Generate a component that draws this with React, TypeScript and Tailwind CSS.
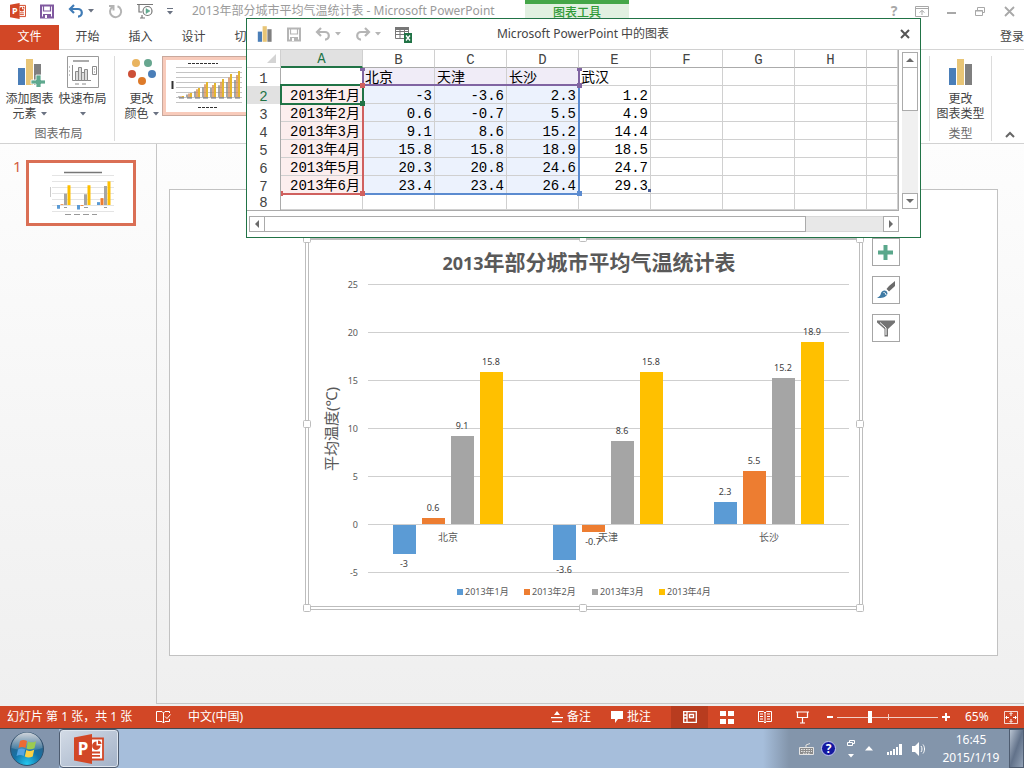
import { ReactNode } from 'react';

const months = ['2013年1月', '2013年2月', '2013年3月', '2013年4月'];
const colors = ['#5b9bd5', '#ed7d31', '#a5a5a5', '#ffc000'];
const cities = [
  { name: '北京', values: [-3, 0.6, 9.1, 15.8] },
  { name: '天津', values: [-3.6, -0.7, 8.6, 15.8] },
  { name: '长沙', values: [2.3, 5.5, 15.2, 18.9] },
];

const columns = ['A', 'B', 'C', 'D', 'E', 'F', 'G', 'H', ''];
const sheet = [
  ['', '北京', '天津', '长沙', '武汉'],
  ['2013年1月', '-3', '-3.6', '2.3', '1.2'],
  ['2013年2月', '0.6', '-0.7', '5.5', '4.9'],
  ['2013年3月', '9.1', '8.6', '15.2', '14.4'],
  ['2013年4月', '15.8', '15.8', '18.9', '18.5'],
  ['2013年5月', '20.3', '20.8', '24.6', '24.7'],
  ['2013年6月', '23.4', '23.4', '26.4', '29.3'],
  [],
];

function Caret({ className = 'text-gray-500' }: { className?: string }) {
  return (
    <svg className={className} width="6" height="4" viewBox="0 0 6 4" fill="currentColor">
      <path d="M0 0h6L3 3.5z" />
    </svg>
  );
}

function PowerPointLogo({ size }: { size: number }) {
  return (
    <svg width={size} height={size} viewBox="0 0 30 30">
      <path d="M16 4.5h13v21H16z" fill="#fff" stroke="#d24726" strokeWidth="1.8" />
      <path d="M18 18.5h8M18 21.8h8" stroke="#d24726" strokeWidth="1.8" />
      <path d="M22.5 7.5v4h4a4.2 4.2 0 1 1-4-4z" fill="#d24726" />
      <path d="M24 6.5a4 4 0 0 1 3.6 3.6H24z" fill="#d24726" />
      <path d="M0 3.5 18 0v30L0 26.5z" fill="#d24726" />
      <text x="9" y="21" textAnchor="middle" fontSize="17" fontWeight="700" fill="#fff">P</text>
    </svg>
  );
}

function SaveIcon({ className }: { className: string }) {
  return (
    <svg className={className} width="14" height="15" viewBox="0 0 14 15" fill="none" stroke="currentColor" strokeWidth="2">
      <path d="M1 1.5h12v12H1z" />
      <path d="M3.5 2v5h7V2" strokeWidth="1.2" />
      <path d="M3 10h8v4H3z" fill="currentColor" stroke="none" />
      <path d="M5 11h2v3H5z" fill="#fff" stroke="none" />
    </svg>
  );
}

function UndoIcon({ className }: { className: string }) {
  return (
    <svg className={className} width="16" height="14" viewBox="0 0 16 14" fill="none" stroke="currentColor" strokeWidth="2.2">
      <path d="M6 1 2 5l4 4M2.5 5H10a3.6 3.6 0 0 1 0 7.6" />
    </svg>
  );
}

function BarsIcon({ size, plus }: { size: number; plus?: boolean }) {
  return (
    <svg width={size} height={size} viewBox="0 0 30 30">
      <path d="M3 11h7v17H3z" fill="#4a7eb8" />
      <path d="M11 2h7v26h-7z" fill="#e8c576" />
      <path d="M19 7h7v21h-7z" fill="#7f7f7f" />
      {plus && <path d="M21 18h5v5h5v4h-5v5h-5v-5h-5v-4h5z" fill="#5fa98f" stroke="#fff" strokeWidth=".8" />}
    </svg>
  );
}

function LayoutIcon() {
  return (
    <svg width="32" height="32" viewBox="0 0 32 32" fill="none" stroke="#8a8a8a">
      <path d="M.5.5h31v31H.5z" fill="#fff" stroke="#9a9a9a" />
      <path d="M6 5h16" stroke="#aaa" strokeWidth="2" />
      <path d="M5.5 9v15.5H24" />
      <path d="M8.500 15.500h3v9h-3zM11.500 11.500h3v13h-3zM14.500 16.500h3v8h-3zM17.500 13.500h3v11h-3z" fill="#ddd" />
      <path d="M25.500 10.500h4v8h-4zM27 13h1M27 16h1M8 28h4M15 28h4M2 11h1M2 15h1M2 19h1" />
    </svg>
  );
}

function ColorsIcon() {
  return (
    <svg width="30" height="30" viewBox="0 0 30 30">
      <circle cx="9" cy="6" r="4" fill="#e9b45f" />
      <circle cx="21" cy="6" r="4" fill="#67a68f" />
      <circle cx="5" cy="17" r="4" fill="#cd4f37" />
      <circle cx="25" cy="17" r="4" fill="#4a7eb8" />
      <circle cx="15" cy="24" r="4" fill="#dd7a29" />
    </svg>
  );
}

function StylePreview() {
  const heights = [1, 4, 9, 15, 14, 18, 23, 26];
  return (
    <svg width="84" height="52" viewBox="0 0 84 52">
      <path d="M0 0h84v52H0z" fill="#fff" />
      <path d="M22 3.5h30M32 47.500h20" stroke="#333" strokeDasharray="3 1" />
      {[8, 13, 18, 23, 28, 33, 38, 43].map((y) => (
        <path key={y} d={`M10 ${y - 0.5}h66`} stroke="#aaa" strokeWidth=".7" />
      ))}
      <path d="M6.500 21v8" stroke="#333" strokeWidth="2" />
      {heights.map((h, i) => (
        <g key={i}>
          <path d={`M${13 + i * 8} ${37 - h * 0.65}v${h * 0.65}`} stroke="#8a8a8a" strokeWidth="1.5" />
          <path d={`M${15 + i * 8} ${37 - h * 0.85}v${h * 0.85}`} stroke="#d68b52" strokeWidth="1.5" />
          <path d={`M${17 + i * 8} ${37 - h}v${h}`} stroke="#e3b72f" strokeWidth="2" />
          <path d={`M${13 + i * 8} 38h5`} stroke="#333" strokeWidth=".7" />
        </g>
      ))}
    </svg>
  );
}

function RibbonButton({ icon, lines, caret }: { icon: ReactNode; lines: string[]; caret?: boolean }) {
  return (
    <button className="flex w-[53px] flex-col items-center whitespace-nowrap leading-[15px]">
      <span className="mb-[3px] flex h-8 items-center">{icon}</span>
      <span>{lines[0]}</span>
      <span className="flex h-[15px] items-center gap-1">
        {lines[1]}
        {caret && <Caret />}
      </span>
    </button>
  );
}

function TitleBar() {
  return (
    <header className="flex h-[25px] items-start">
      <div className="flex h-[22px] w-[525px] shrink-0 items-center gap-3.5 pl-2.5">
        <PowerPointLogo size={16} />
        <button aria-label="保存"><SaveIcon className="text-[#80599f]" /></button>
        <button aria-label="撤消" className="flex items-center gap-1">
          <UndoIcon className="text-[#3f7bb6]" />
          <Caret />
        </button>
        <button aria-label="重复">
          <svg width="15" height="15" viewBox="0 0 15 15" fill="none" stroke="#b4b4b4" strokeWidth="2">
            <path d="M9.500 2.300a5.600 5.600 0 1 1-5 .6M1 2h4.500v4.500" />
          </svg>
        </button>
        <button aria-label="从头开始">
          <svg width="16" height="16" viewBox="0 0 16 16" fill="none" stroke="#777" strokeWidth="1.2">
            <path d="M0 1.500h16M2 2v7h3M5 12v3M3 15h5" />
            <circle cx="10.500" cy="8" r="4.500" fill="#fff" />
            <path d="m9 5.500 4 2.500-4 2.500z" fill="#5fa98f" stroke="#5fa98f" strokeWidth=".5" />
          </svg>
        </button>
        <button aria-label="自定义快速访问工具栏" className="flex flex-col items-center gap-0.5">
          <span className="h-px w-1.5 bg-gray-500" />
          <Caret />
        </button>
        <h1 className="ml-[5px] whitespace-nowrap text-[#9b9b9b]">2013年部分城市平均气温统计表 - Microsoft PowerPoint</h1>
      </div>
      <div className="h-[25px] w-[104px] shrink-0 border-t-4 border-[#44a648] bg-[#e1f0e1] text-center font-medium leading-[17px] text-[#2f9a37]">
        图表工具
      </div>
      <div className="ml-auto flex h-[22px] items-center gap-[15px] pr-2 text-[#a8a8a8]">
        <button aria-label="帮助" className="w-3 text-sm font-bold">?</button>
        <button aria-label="功能区显示选项">
          <svg width="14" height="12" viewBox="0 0 14 12" fill="none" stroke="currentColor">
            <path d="M.5 1.500h13v10H.5zM.5 3.500h13M7 10V5.500M4.500 7.500 7 5.500l2.500 2" />
          </svg>
        </button>
        <button aria-label="最小化">
          <svg width="14" height="12" viewBox="0 0 14 12" stroke="currentColor" strokeWidth="2"><path d="M3 8h9" /></svg>
        </button>
        <button aria-label="向下还原">
          <svg width="14" height="12" viewBox="0 0 14 12" fill="none" stroke="currentColor">
            <path d="M2.500 5.500h7v5h-7zM4.500 5V2.500h7v5H10M2 6h8" />
          </svg>
        </button>
        <button aria-label="关闭">
          <svg width="14" height="12" viewBox="0 0 14 12" stroke="currentColor" strokeWidth="1.8"><path d="m3 2 9 9M12 2l-9 9" /></svg>
        </button>
      </div>
    </header>
  );
}

function Ribbon() {
  return (
    <>
      <nav className="flex h-[25px] items-center border-b border-[#d5d5d5]">
        <button className="h-[25px] w-[59px] bg-[#d24726] text-white">文件</button>
        <div className="ml-[2px] flex">
          {['开始', '插入', '设计', '切换'].map((tab) => (
            <button key={tab} className="w-[53px] text-center">{tab}</button>
          ))}
        </div>
        <button className="ml-auto">登录</button>
      </nav>
      <div className="flex h-[94px] items-stretch border-b border-[#d2d2d2] pb-0.5 pt-1.5">
        <div className="flex w-[115px] flex-col justify-between border-r border-[#dcdcdc] pl-[3px]">
          <div className="flex">
            <RibbonButton icon={<BarsIcon size={30} plus />} lines={['添加图表', '元素']} caret />
            <RibbonButton icon={<LayoutIcon />} lines={['快速布局', '']} caret />
          </div>
          <p className="text-center leading-[15px] text-[#6a6a6a]">图表布局</p>
        </div>
        <div className="flex items-start">
          <div className="-mr-1.5">
            <RibbonButton icon={<ColorsIcon />} lines={['更改', '颜色']} caret />
          </div>
          <button aria-label="图表样式" className="h-[60px] w-[94px] border border-[#c9a89c] bg-[#f8cbbb] p-[3px]">
            <StylePreview />
          </button>
        </div>
        <div className="ml-auto flex w-[63px] flex-col items-center justify-between border-x border-[#dcdcdc]">
          <RibbonButton icon={<BarsIcon size={30} />} lines={['更改', '图表类型']} />
          <p className="leading-[15px] text-[#6a6a6a]">类型</p>
        </div>
        <button aria-label="折叠功能区" className="flex w-8 items-end justify-center pb-0.5 pl-1">
          <svg width="10" height="8" viewBox="0 0 10 8" fill="none" stroke="#666" strokeWidth="2"><path d="m1 6 4-4 4 4" /></svg>
        </button>
      </div>
    </>
  );
}

// Drawing area of the chart: plot runs from x=66 to x=547, zero line at y=288
const yOf = (v: number) => Math.round(288 - v * 9.62);

function Chart() {
  return (
    <svg width="564" height="378" viewBox="0 0 564 378" className="shrink-0" role="img" aria-label="2013年部分城市平均气温统计表">
      <g fill="#fff" stroke="#bdbdbd">
        <path d="M3.500 2.500h557v371H3.500z" />
        <path d="M6.500 3.500h551v367H6.500z" />
        {[[1, -1], [277, -2], [554, -1], [1, 184], [554, 184], [1, 368], [277, 368], [554, 368]].map(([x, y]) => (
          <rect key={`${x}-${y}`} x={x + 0.5} y={y + 0.5} width="7" height="7" rx="1" />
        ))}
      </g>
      <text x="287" y="34" textAnchor="middle" fontWeight="700" fill="#595959" fontSize="21">
        <tspan fontSize="18">2013</tspan>年部分城市平均气温统计表
      </text>
      <g fontSize="9" fill="#595959">
        {[25, 20, 15, 10, 5, 0, -5].map((v) => (
          <g key={v}>
            <path d={`M66 ${yOf(v) + 0.5}h481`} stroke="#cfcfcf" />
            <text x="56" y={yOf(v) + 4} textAnchor="end">{v}</text>
          </g>
        ))}
      </g>
      <text transform="translate(35 193) rotate(-90)" textAnchor="middle" fontSize="15" fill="#595959">平均温度(℃)</text>
      {cities.map((city, c) => (
        <g key={city.name}>
          {city.values.map((v, i) => {
            const x = 91 + Math.floor(c * 160.5) + i * 29;
            const top = Math.min(yOf(v), yOf(0));
            return (
              <g key={i}>
                <rect x={x} y={v < 0 ? top + 1 : top} width="23" height={Math.abs(yOf(v) - yOf(0))} fill={colors[i]} />
                <text x={x + 11} y={v < 0 ? yOf(v) + 14 : yOf(v) - 7} textAnchor="middle" fontSize="9" fill="#404040">{v}</text>
              </g>
            );
          })}
          <text x={146 + Math.floor(c * 160.5)} y="305" textAnchor="middle" fontSize="10" fill="#595959">{city.name}</text>
        </g>
      ))}
      {months.map((month, i) => (
        <g key={month}>
          <rect x={155 + Math.round(i * 67.4)} y="353" width="6" height="6" fill={colors[i]} />
          <text x={163 + Math.round(i * 67.4)} y="359" fontSize="9" fill="#595959">{month}</text>
        </g>
      ))}
    </svg>
  );
}

function SlideThumbnail() {
  return (
    <svg width="104" height="60" viewBox="0 0 104 60">
      <path d="M0 0h104v60H0z" fill="#fff" />
      <path d="M35 9.500h38" stroke="#777" strokeWidth="1.500" />
      {[12, 18, 24, 30, 36, 42, 48].map((y) => (
        <path key={y} d={`M23 ${y + 0.5}h62`} stroke="#ddd" strokeWidth=".8" />
      ))}
      {cities.map((city, c) =>
        city.values.map((v, i) => (
          <rect
            key={`${c}-${i}`}
            x={28 + c * 20 + i * 3.5}
            y={v < 0 ? 42 : 42 - v * 1.25}
            width="3"
            height={Math.abs(v) * 1.25}
            fill={colors[i]}
          />
        )),
      )}
      <path d="M35 44.500h3M55 44.500h4M75 44.500h3M36 51.500h32" stroke="#999" strokeDasharray="6 3" />
      <path d="M21.500 24v10" stroke="#ccc" />
    </svg>
  );
}

function ChartTools() {
  return (
    <div className="flex flex-col gap-2.5 pt-[2px]">
      {[
        { label: '图表元素', icon: <path d="M7.500 2h4v5.500H17v4h-5.500V17h-4v-5.500H2v-4h5.500z" fill="#5aa78b" /> },
        {
          label: '图表样式',
          icon: (
            <>
              <path d="M19 0 13 5 10.500 8l2.500 2.500L19 5z" fill="#6b6b6b" />
              <path d="m10 8.500 2.500 2.500" stroke="#fff" />
              <path d="M9 9.500a3 3 0 0 1 2.500 3C11 16 6 17.500 1 17c3-1.500 3.500-3 4-5 .7-2 2.400-2.800 4-2.500z" fill="#3f7ba5" />
              <path d="M7.500 11.500c1.500 0 2.500 1 2.500 2.500" stroke="#fff" fill="none" />
            </>
          ),
        },
        {
          label: '图表筛选器',
          icon: (
            <>
              <path d="M1 1.500h18v2L12 10v7.500H8.500V10L1 3.500z" fill="#747474" />
              <path d="m4 3.500 6 5.500v7" stroke="#fff" fill="none" />
            </>
          ),
        },
      ].map((tool) => (
        <button key={tool.label} aria-label={tool.label} className="flex h-7 w-7 items-center justify-center border border-[#a6a6a6] bg-white">
          <svg width="20" height="19" viewBox="0 0 20 19">{tool.icon}</svg>
        </button>
      ))}
    </div>
  );
}

function Workspace() {
  return (
    <main className="flex flex-1 bg-gradient-to-b from-[#fdfdfd] to-[#efefef] pb-[2px]">
      <aside className="flex w-[157px] shrink-0 items-start border-r border-[#c6c6c6] pl-3 pt-4">
        <span className="w-3.5 pl-px text-[15px] leading-3 text-[#d35f41]">1</span>
        <button aria-label="幻灯片 1" className="border-[3px] border-[#da6f55]"><SlideThumbnail /></button>
      </aside>
      <section className="flex flex-1 border-b border-[#c6c6c6] pb-[47px] pl-3 pr-[26px] pt-[45px]">
        <div className="flex flex-1 items-start gap-1.5 border border-[#c2c2c2] bg-white pl-[132px] pt-[46px]">
          <Chart />
          <ChartTools />
        </div>
      </section>
    </main>
  );
}

function cellStyle(row: number, col: number) {
  if (row === 0) return col >= 1 && col <= 3 ? 'bg-[#f0ecf7]' : '';
  if (row > 6) return '';
  if (col === 0) return 'bg-[#fceeee] text-right';
  if (col <= 3) return 'bg-[#ecf2fd] text-right';
  return 'text-right';
}

function SheetTable() {
  return (
    <div className="relative">
      <table className="w-[652px] table-fixed border-separate border-spacing-0 border-b border-r border-[#ababab] font-['Liberation_Mono','Noto_Sans_CJK_SC',monospace] text-sm leading-[13px] text-black">
        <colgroup>
          <col className="w-[34px]" />
          <col className="w-[82px]" />
          {columns.slice(1, 8).map((c) => <col key={c} className="w-[72px]" />)}
          <col />
        </colgroup>
        <thead>
          <tr className="h-[18px] text-[#444]">
            <th className="border-b border-r border-[#d0d0d0] p-0">
              <svg className="ml-auto mr-1" width="9" height="9" viewBox="0 0 9 9"><path d="M9 0v9H0z" fill="#d4d4d4" /></svg>
            </th>
            {columns.map((c) => (
              <th
                key={c}
                scope="col"
                className={`border-r px-0 pb-0 pt-[3px] font-normal ${c === 'A' ? 'border-b-2 border-b-[#217346] border-r-[#d0d0d0] bg-[#e1e1e1] text-[#217346]' : 'border-b border-b-[#ababab] border-r-[#d0d0d0]'}`}
              >
                {c}
              </th>
            ))}
          </tr>
        </thead>
        <tbody>
          {sheet.map((row, r) => (
            <tr key={r} className={r === 7 ? 'h-4' : 'h-[18px]'}>
              <th
                scope="row"
                className={`border-r border-[#ababab] px-0 pb-0 font-normal ${r === 7 ? 'pt-[2px]' : 'pt-1'} ${r === 1 ? 'bg-[#e1e1e1] text-[#217346]' : 'text-[#444]'}`}
              >
                {r + 1}
              </th>
              {columns.map((c, i) => (
                <td
                  key={c}
                  className={`whitespace-nowrap border-b border-r border-[#d0d0d0] px-[2px] pb-0 ${r === 7 ? 'pt-[2px]' : 'pt-1'} ${cellStyle(r, i)}`}
                >
                  {row[i]}
                </td>
              ))}
            </tr>
          ))}
        </tbody>
      </table>
      {/* Source range outlines */}
      <div className="absolute left-[115px] top-[18px] h-[18px] w-[218px] border-x-2 border-b-2 border-[#8064a2]" />
      <div className="absolute left-[34px] top-[36px] h-[109px] w-[83px] border-b-2 border-r-2 border-[#d0605e]" />
      <div className="absolute left-[117px] top-[36px] h-[109px] w-[216px] border-b-2 border-r-2 border-[#5b8bd0]" />
      <div className="absolute left-[33px] top-[34px] h-[21px] w-[84px] border-2 border-[#217346]" />
      <div className="absolute left-[113px] top-[18px] h-[3px] w-[5px] bg-[#8064a2]" />
      <div className="absolute left-[330px] top-[18px] h-[3px] w-[5px] bg-[#8064a2]" />
      <div className="absolute left-[113px] top-[33px] size-[5px] bg-[#d0605e]" />
      <div className="absolute left-[113px] top-[51px] size-[5px] bg-[#217346]" />
      <div className="absolute left-[330px] top-[33px] size-[5px] bg-[#8064a2]" />
      <div className="absolute left-[113px] top-[141px] size-[5px] bg-[#d0605e]" />
      <div className="absolute left-[330px] top-[141px] size-[5px] bg-[#5b8bd0]" />
      <div className="absolute left-[34px] top-[141px] h-[5px] w-[2px] bg-[#d0605e]" />
      <div className="absolute left-[401px] top-[139px] size-[3px] bg-[#4b5f94]" />
    </div>
  );
}

function ScrollButton({ label, d }: { label: string; d: string }) {
  return (
    <button aria-label={label} className="flex size-4 shrink-0 items-center justify-center border border-[#ababab] bg-white">
      <svg width="8" height="8" viewBox="0 0 8 8" fill="#6b6b6b"><path d={d} /></svg>
    </button>
  );
}

function ChartDataWindow() {
  return (
    <section className="absolute left-[246px] top-[18px] w-[675px] border border-[#217346] bg-white pb-[5px]">
      <header className="flex h-[30px] items-center">
        <div className="flex flex-1 items-center gap-3.5 pl-[9px]">
          <BarsIcon size={18} />
          <button aria-label="保存" className="-ml-px"><SaveIcon className="text-[#b5b5b5]" /></button>
          <button aria-label="撤消" className="flex items-center gap-1">
            <UndoIcon className="text-[#b5b5b5]" />
            <Caret className="text-[#b5b5b5]" />
          </button>
          <button aria-label="恢复" className="flex items-center gap-1">
            <UndoIcon className="-scale-x-100 text-[#b5b5b5]" />
            <Caret className="text-[#b5b5b5]" />
          </button>
          <button aria-label="在 Microsoft Excel 中编辑数据">
            <svg width="17" height="17" viewBox="0 0 17 17">
              <path d="M.5 2.500h13v10H.5zM.5 5.500h13M.5 8.500h13M5 3v10M9.500 3v10" fill="none" stroke="#777" />
              <path d="M0 1h14v3H0z" fill="#777" />
              <path d="M9 7h8v10H9z" fill="#217346" />
              <path d="m11 9.500 4 5M15 9.500l-4 5" stroke="#fff" strokeWidth="1.300" />
            </svg>
          </button>
        </div>
        <h2 className="text-[#444]">Microsoft PowerPoint 中的图表</h2>
        <div className="flex flex-1 justify-end pr-2.5">
          <button aria-label="关闭">
            <svg width="10" height="10" viewBox="0 0 10 10" stroke="#555" strokeWidth="2"><path d="m1 1 8 8M9 1 1 9" /></svg>
          </button>
        </div>
      </header>
      <div className="flex border-t border-[#d0d0d0]">
        <SheetTable />
        <div className="my-[2px] ml-[3px] flex w-4 flex-col bg-[#f0f0f0]">
          <ScrollButton label="向上" d="M4 2 8 6H0z" />
          <div className="-mt-px h-11 border border-[#ababab] bg-white" />
          <div className="flex-1" />
          <ScrollButton label="向下" d="M0 2h8L4 6z" />
        </div>
      </div>
      <div className="ml-[2px] mt-[5px] flex w-[650px] bg-[#e8e8e8]">
        <ScrollButton label="向左" d="M6 0v8L2 4z" />
        <div className="-ml-px w-[542px] border border-[#ababab] bg-white" />
        <div className="flex-1 border-y border-[#d8d8d8]" />
        <ScrollButton label="向右" d="M2 0v8l4-4z" />
      </div>
    </section>
  );
}

function StatusBar() {
  return (
    <footer className="flex h-[22px] items-center bg-[#d24726] pl-[7px] text-white">
      <span className="w-[149px] whitespace-nowrap">幻灯片 第 1 张，共 1 张</span>
      <button aria-label="拼写检查" className="w-8">
        <svg width="15" height="13" viewBox="0 0 15 13" fill="none" stroke="currentColor">
          <path d="M7.500 2 6 .5H.5v10H6L7.500 12 9 10.500h4.500V8M7.500 2v10M7.500 2 9 .5h4.500V2M9 5.500l2 2 3.500-4" />
        </svg>
      </button>
      <button>中文(中国)</button>
      <div className="ml-auto flex h-full items-center">
        <button className="mr-5 flex items-center gap-1">
          <svg width="12" height="12" viewBox="0 0 12 12" fill="currentColor"><path d="M6 0 9 4H3zM0 6h12v1.300H0zM1 10h10v1.300H1z" /></svg>
          备注
        </button>
        <button className="mr-5 flex items-center gap-1">
          <svg width="12" height="12" viewBox="0 0 12 12" fill="currentColor"><path d="M0 0h12v8H7l-3 4V8H0z" /></svg>
          批注
        </button>
        <button aria-label="普通视图" className="flex h-full w-[37px] items-center justify-center bg-[#b83c1f]">
          <svg width="14" height="12" viewBox="0 0 14 12" fill="none" stroke="currentColor" strokeWidth="1.300">
            <path d="M.7.7h12.600v10.600H.7zM4 1v10M6.500 3.500h4v3h-4zM1 4h3M1 7h3" />
          </svg>
        </button>
        <button aria-label="幻灯片浏览" className="flex w-[38px] justify-center">
          <svg width="14" height="13" viewBox="0 0 14 13" fill="currentColor"><path d="M0 0h6v5H0zM8 0h6v5H8zM0 8h6v5H0zM8 8h6v5H8z" /></svg>
        </button>
        <button aria-label="阅读视图" className="flex w-[37px] justify-center">
          <svg width="14" height="13" viewBox="0 0 14 13" fill="none" stroke="currentColor">
            <path d="M7 2 5.500.5H.5v10h5L7 12l1.500-1.500h5V.5h-5zM7 2v10M2 3h3M2 5.500h3M2 8h3M9 3h3M9 5.500h3M9 8h3" />
          </svg>
        </button>
        <button aria-label="幻灯片放映" className="flex w-[38px] justify-center">
          <svg width="13" height="13" viewBox="0 0 13 13" fill="none" stroke="currentColor" strokeWidth="1.200">
            <path d="M0 1h13M1.500 1.500v5h10v-5M6.500 6.500v5M4 12h5" />
          </svg>
        </button>
        <button aria-label="缩小" className="ml-1.5 h-0.5 w-1.5 bg-white" />
        <span className="relative mx-1 flex h-full items-center">
          <input
            type="range"
            aria-label="显示比例"
            aria-valuetext="65%"
            defaultValue={32}
            className="h-3 w-[101px] appearance-none bg-transparent [&::-webkit-slider-runnable-track]:h-px [&::-webkit-slider-runnable-track]:bg-[#f3d0c6] [&::-webkit-slider-thumb]:-mt-[6px] [&::-webkit-slider-thumb]:h-3 [&::-webkit-slider-thumb]:w-1 [&::-webkit-slider-thumb]:appearance-none [&::-webkit-slider-thumb]:bg-white"
          />
          <span className="absolute left-1/2 h-1.5 w-px bg-[#f3d0c6]" />
        </span>
        <button aria-label="放大">
          <svg width="8" height="8" viewBox="0 0 8 8" stroke="currentColor" strokeWidth="2"><path d="M0 4h8M4 0v8" /></svg>
        </button>
        <span className="ml-[15px] w-[39px]">65%</span>
        <button aria-label="使幻灯片适应当前窗口" className="mr-1.5">
          <svg width="14" height="13" viewBox="0 0 14 13" fill="none" stroke="currentColor">
            <path d="M.5.5h13v12H.5z" strokeOpacity=".8" />
            <path d="M7 2v3M7 8v3M2 6.500h3M9 6.500h3M5.500 3 7 1.500 8.500 3M5.500 10 7 11.500 8.500 10M3 5 1.500 6.500 3 8M11 5l1.500 1.500L11 8" />
          </svg>
        </button>
      </div>
    </footer>
  );
}

function Taskbar() {
  return (
    <div className="flex h-10 items-center border-t border-[#45494f] bg-[#a6bedb] text-white">
      <div className="flex h-full w-[59px] items-center justify-center bg-[#8395ad] pr-1.5">
        <button aria-label="开始">
          <svg width="36" height="36" viewBox="0 0 36 36">
            <defs>
              <radialGradient id="orb" cx=".5" cy=".95" r=".9">
                <stop offset="0" stopColor="#25c8ef" />
                <stop offset=".45" stopColor="#1473a8" />
                <stop offset="1" stopColor="#3c5a78" />
              </radialGradient>
              <linearGradient id="gloss" x1="0" y1="0" x2="0" y2="1">
                <stop offset="0" stopColor="#fff" stopOpacity=".75" />
                <stop offset="1" stopColor="#fff" stopOpacity=".1" />
              </linearGradient>
            </defs>
            <circle cx="18" cy="18" r="16.500" fill="url(#orb)" stroke="#31506c" />
            <path d="M2.500 17a15.500 15.500 0 0 1 31 0c-8 3-22 3-31 0z" fill="url(#gloss)" />
            <path d="M11 10c2.500-1.500 4.500-1.300 7 0l-1.500 7c-2.500-1.200-4.500-1.200-7 0z" fill="#ee6a34" />
            <path d="M19 10.500c2.500 1.200 5 1.200 8-.3l-1.500 7c-2.800 1.400-5 1.400-8 .2z" fill="#9ccb50" />
            <path d="M9 18.500c2.500-1.200 4.700-1.200 7.200 0L14.700 25c-2.500-1.200-4.700-1.200-7.200 0z" fill="#54a4e2" />
            <path d="M17.300 19c2.600 1.200 5 1.200 7.900-.2L23.700 25.500c-2.700 1.400-5.200 1.400-7.900.1z" fill="#fbd144" />
          </svg>
        </button>
      </div>
      <button aria-label="PowerPoint" className="flex h-[39px] w-[60px] items-center justify-center rounded-sm border border-[#4e5c70] bg-gradient-to-br from-[#d3dbe6] to-[#a3b2c8] shadow-[inset_0_0_0_1px_#dfe6ef]">
        <PowerPointLogo size={30} />
      </button>
      <div className="ml-auto flex h-full items-center bg-gradient-to-r from-[#a6bedb] to-[#8395ab] to-10% pl-9">
        <svg width="15" height="12" viewBox="0 0 15 12" fill="none" stroke="#e4e4e4">
          <path d="M.5 4.500h14v7H.5zM7 4V2l4-1.500" fill="#8b8b8b" />
          <path d="M2 6.500h11M2 8.500h11M4 10.300h7" strokeDasharray="1.500 1" />
        </svg>
        <span className="ml-[7px] flex size-[15px] items-center justify-center rounded-full border border-[#c4c8ef] bg-[#1418a0] text-xs font-bold">?</span>
        <div className="ml-[10px] flex w-[10px] flex-col items-center gap-2">
          <svg width="8" height="6" viewBox="0 0 8 6" fill="none" stroke="#fff"><path d="M.5 2.500h5v3h-5zM2.500 2V.5h5v3H6" /></svg>
          <Caret className="text-white" />
        </div>
        <svg className="ml-[9px]" width="8" height="5" viewBox="0 0 8 5" fill="#fff"><path d="M4 0 8 4.500H0z" /></svg>
        <svg className="ml-3.5" width="16" height="13" viewBox="0 0 16 13" fill="#fff">
          <path d="M0 10h2v3H0zM3 9h2v4H3zM6 7h2v6H6zM9 5h2v8H9zM12 2h3v11h-3z" />
        </svg>
        <svg className="ml-[9px]" width="14" height="14" viewBox="0 0 14 14" fill="#fff">
          <path d="M0 4h3l4-4v14l-4-4H0z" />
          <path d="M9 4c1.300 1.500 1.300 4.500 0 6M11 2.500c2 2.500 2 6.500 0 9" fill="none" stroke="#fff" />
        </svg>
        <div className="ml-[15px] w-[60px] whitespace-nowrap text-center leading-[18px]">
          <div>16:45</div>
          <div>2015/1/19</div>
        </div>
        <button aria-label="显示桌面" className="ml-2 h-full w-[15px] border border-[#4e5c70] bg-gradient-to-br from-[#b8c3d1] via-[#62728a] to-[#94a3b7]" />
      </div>
    </div>
  );
}

export default function App() {
  return (
    <div className="relative flex min-h-screen flex-col overflow-x-hidden bg-white font-['Noto_Sans','Noto_Sans_CJK_SC',sans-serif] text-xs text-[#444]">
      <TitleBar />
      <Ribbon />
      <Workspace />
      <ChartDataWindow />
      <StatusBar />
      <Taskbar />
    </div>
  );
}
